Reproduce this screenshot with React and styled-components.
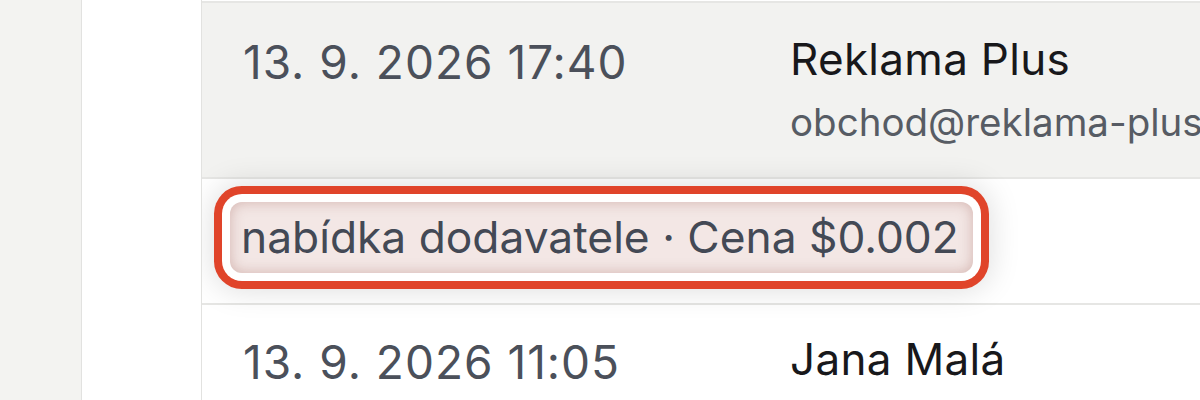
import React from 'react';
import styled, { createGlobalStyle } from 'styled-components';

const GlobalStyle = createGlobalStyle`
  html, body {
    margin: 0;
    padding: 0;
    background: #ffffff;
    font-family: Inter, "Noto Sans", sans-serif;
    overflow: hidden;
  }
`

const Page = styled.div`
  display: flex;
  width: 1200px;
  height: 400px;
  overflow: hidden;
`

const Sidebar = styled.aside`
  flex: 0 0 81px;
  background: #f3f3f1;
  border-right: 1px solid #e2e2e0;
`

const Gutter = styled.div`
  flex: 0 0 119px;
  background: #ffffff;
  border-right: 1px solid #e2e2e0;
`

const Table = styled.div`
  flex: 1;
  margin-top: 1px;
  border-top: 2px solid #e6e6e4;
  display: flex;
  flex-direction: column;
  min-width: 0;
  overflow: hidden;
`

const Row = styled.div`
  flex-shrink: 0;
  display: grid;
  grid-template-columns: 547px auto;
  align-items: start;
  height: ${p => p.$height}px;
  box-sizing: border-box;
  background: ${p => (p.$shaded ? '#f2f2f0' : '#ffffff')};
  border-bottom: 2px solid #e6e6e4;
  padding: ${p => p.$top}px 0 0 41px;
  white-space: nowrap;
`

const DateCell = styled.div`
  font-size: 46px;
  line-height: 1;
  color: #4b505a;
  letter-spacing: 1px;
`

const Contact = styled.div`
  display: flex;
  flex-direction: column;
  gap: 22px;
  margin-top: -2px;
`

const Name = styled.div`
  font-size: 44px;
  line-height: 1;
  color: #18181b;
  letter-spacing: 0.3px;
`

const Email = styled.div`
  font-size: 38.5px;
  line-height: 1;
  color: #575c64;
`

const NoteRow = styled.div`
  flex-shrink: 0;
  height: 126px;
  box-sizing: border-box;
  border-bottom: 2px solid #e6e6e4;
  background: #ffffff;
  padding: 23px 0 0 28px;
  position: relative;
  z-index: 1;
`

const Tag = styled.span`
  display: inline-block;
  padding: 9px 14px 10px 11px;
  border-radius: 12px;
  background: #f3e7e5;
  color: #434955;
  font-size: 44.3px;
  line-height: 52px;
  white-space: nowrap;
  box-shadow:
    inset 0 0 14px rgba(150, 80, 70, 0.34),
    0 0 0 8px #ffffff,
    0 0 0 16px #e0442a,
    0 0 30px 18px rgba(0, 0, 0, 0.13);
`

export default function App() {
  return (
    <>
      <GlobalStyle />
      <Page>
        <Sidebar />
        <Gutter />
        <Table>
          <Row $shaded $height={176} $top={36}>
            <DateCell>13. 9. 2026 17:40</DateCell>
            <Contact>
              <Name>Reklama Plus</Name>
              <Email>obchod@reklama-plus.cz</Email>
            </Contact>
          </Row>
          <NoteRow>
            <Tag>nabídka dodavatele · Cena $0.002</Tag>
          </NoteRow>
          <Row $height={120} $top={34}>
            <DateCell>13. 9. 2026 11:05</DateCell>
            <Contact>
              <Name>Jana Malá</Name>
            </Contact>
          </Row>
        </Table>
      </Page>
    </>
  );
}
